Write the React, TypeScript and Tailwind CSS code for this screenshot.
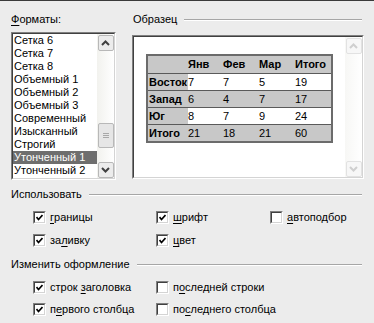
import React from "react";

const formats = [
  "Сетка 6",
  "Сетка 7",
  "Сетка 8",
  "Объемный 1",
  "Объемный 2",
  "Объемный 3",
  "Современный",
  "Изысканный",
  "Строгий",
  "Утонченный 1",
  "Утонченный 2",
];

const rows = [
  { name: "Восток", values: ["7", "7", "5", "19"], white: true },
  { name: "Запад", values: ["6", "4", "7", "17"], white: false },
  { name: "Юг", values: ["8", "7", "9", "24"], white: true },
  { name: "Итого", values: ["21", "18", "21", "60"], white: false },
];

const colW = ["w-[35px]", "w-[36px]", "w-[36px]", "w-[36px]"];

// sunken 2px frame, old windows style
const Sunken: React.FC<{ className?: string; children: React.ReactNode }> = ({ className, children }) => (
  <div className={`border border-t-[#808080] border-l-[#808080] border-r-white border-b-white ${className ?? ""}`}>
    <div className="h-full w-full border border-t-[#404040] border-l-[#404040] border-r-[#d4d4d4] border-b-[#d4d4d4] bg-white">
      {children}
    </div>
  </div>
);

const Chevron: React.FC<{ up?: boolean; color: string }> = ({ up, color }) => (
  <svg width="9" height="6" viewBox="0 0 9 6">
    <polyline
      points={up ? "1,5 4.5,1.5 8,5" : "1,1 4.5,4.5 8,1"}
      fill="none"
      stroke={color}
      strokeWidth="2"
    />
  </svg>
);

const ScrollBtn: React.FC<{ up?: boolean; disabled?: boolean }> = ({ up, disabled }) => (
  <div
    className={`flex h-[16px] w-[16px] items-center justify-center rounded-[2px] border ${
      disabled ? "border-[#e2e2e2] bg-[#f7f7f7]" : "border-[#b8b8b8] bg-[#ececec]"
    }`}
  >
    <Chevron up={up} color={disabled ? "#cfcfcf" : "#404040"} />
  </div>
);

const Mn: React.FC<{ text: string; at: number }> = ({ text, at }) => (
  <span>
    {text.slice(0, at)}
    <span className="underline underline-offset-[2px]">{text[at]}</span>
    {text.slice(at + 1)}
  </span>
);

const Check: React.FC<{ checked?: boolean; label: string; at: number; className?: string }> = ({
  checked,
  label,
  at,
  className,
}) => (
  <div className={`flex items-center ${className ?? ""}`}>
    <div className="h-[13px] w-[13px] border border-t-[#808080] border-l-[#808080] border-r-white border-b-white">
      <div className="flex h-full w-full items-center justify-center border border-t-[#404040] border-l-[#404040] border-r-[#d4d4d4] border-b-[#d4d4d4] bg-white">
        {checked && (
          <svg width="7" height="7" viewBox="0 0 7 7">
            <polyline points="0.5,3 2.5,5.5 6.5,1" fill="none" stroke="#000" strokeWidth="1.7" />
          </svg>
        )}
      </div>
    </div>
    <span className="ml-[4px]">
      <Mn text={label} at={at} />
    </span>
  </div>
);

const GroupTitle: React.FC<{ title: string; className?: string }> = ({ title, className }) => (
  <div className={`flex items-center ${className ?? ""}`}>
    <span>{title}</span>
    <div className="ml-[7px] mr-[12px] h-[2px] flex-1 border-t border-t-[#a6a6a6] border-b border-b-white" />
  </div>
);

export default function App() {
  return (
    <div className="h-[323px] w-[374px] overflow-hidden border-t border-[#3a3a3a] bg-[#ececec] text-[11px] leading-[13px] text-black [font-family:'Liberation_Sans',Arial,sans-serif]">
      {/* top part: list + preview */}
      <div className="flex pl-[11px] pt-[12px]">
        <div className="w-[105px]">
          <div className="h-[13px]">
            <Mn text="Форматы:" at={0} />
          </div>
          <Sunken className="mt-[6px] h-[148px] w-[105px]">
            <div className="flex h-full">
              <div className="flex-1">
                {formats.map((f) => (
                  <div
                    key={f}
                    className={`h-[13px] pl-[1px] whitespace-nowrap ${
                      f === "Утонченный 1" ? "bg-[#6e6e6e] text-white" : ""
                    }`}
                  >
                    {f}
                  </div>
                ))}
              </div>
              <div className="flex w-[17px] flex-col items-center bg-gradient-to-r from-[#f2f2ee] to-white pt-[1px]">
                <ScrollBtn up />
                <div className="flex-1" />
                <div className="mb-[14px] flex h-[25px] w-[16px] items-center justify-center rounded-[2px] border border-[#b8b8b8] bg-[#e6e6e6]">
                  <div className="flex flex-col gap-[1px]">
                    <div className="h-px w-[6px] bg-[#a8a8a8]" />
                    <div className="h-px w-[6px] bg-[#a8a8a8]" />
                    <div className="h-px w-[6px] bg-[#a8a8a8]" />
                  </div>
                </div>
                <ScrollBtn />
              </div>
            </div>
          </Sunken>
        </div>

        <div className="ml-[16px] flex-1">
          <GroupTitle title="Образец" className="ml-[1px] h-[13px]" />
          <Sunken className="mt-[9px] h-[144px] w-[232px]">
            <div className="flex h-full">
              <div className="flex-1 pl-[12px] pt-[17px]">
                <div className="inline-block border-2 border-[#6b6b6b] bg-[#c8c8c8] font-bold text-[11px]">
                  <div className="flex h-[17px] items-center">
                    <div className="w-[40px]" />
                    {["Янв", "Фев", "Мар", "Итого"].map((h, i) => (
                      <div key={h} className={`${colW[i]}`}>
                        {h}
                      </div>
                    ))}
                  </div>
                  {rows.map((r) => (
                    <div key={r.name} className="flex h-[17px] border-t border-[#5a5a5a]">
                      <div className="flex w-[40px] items-center pl-[1px]">{r.name}</div>
                      {r.values.map((v, i) => (
                        <div
                          key={i}
                          className={`flex items-center font-normal ${colW[i]} ${r.white ? "bg-white" : ""}`}
                        >
                          {v}
                        </div>
                      ))}
                    </div>
                  ))}
                </div>
              </div>
              <div className="flex w-[17px] flex-col items-center bg-gradient-to-r from-[#f7f7f5] to-white pt-[1px]">
                <ScrollBtn up disabled />
                <div className="flex-1" />
                <ScrollBtn disabled />
              </div>
            </div>
          </Sunken>
        </div>
      </div>

      {/* bottom part: options */}
      <div className="pl-[11px] pt-[8px]">
        <GroupTitle title="Использовать" className="h-[13px]" />
        <div className="mt-[10px] flex h-[13px]">
          <Check checked label="границы" at={0} className="ml-[22px] w-[123px]" />
          <Check checked label="шрифт" at={0} className="w-[114px]" />
          <Check label="автоподбор" at={0} />
        </div>
        <div className="mt-[10px] flex h-[13px]">
          <Check checked label="заливку" at={2} className="ml-[22px] w-[123px]" />
          <Check checked label="цвет" at={0} />
        </div>
        <GroupTitle title="Изменить оформление" className="mt-[11px] h-[13px]" />
        <div className="mt-[10px] flex h-[13px]">
          <Check checked label="строк заголовка" at={6} className="ml-[22px] w-[123px]" />
          <Check label="последней строки" at={1} />
        </div>
        <div className="mt-[9px] flex h-[13px]">
          <Check checked label="первого столбца" at={1} className="ml-[22px] w-[123px]" />
          <Check label="последнего столбца" at={2} />
        </div>
      </div>
    </div>
  );
}
